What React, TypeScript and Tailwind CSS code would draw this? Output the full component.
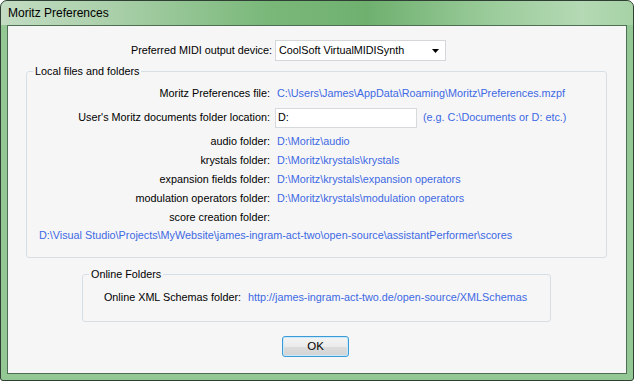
import React from 'react';

const linkCls = 'text-[#3d69e4] whitespace-nowrap';

const rows: { label: string; value?: string; h: string }[] = [
  { label: 'audio folder:', value: 'D:\\Moritz\\audio', h: 'h-[19px]' },
  { label: 'krystals folder:', value: 'D:\\Moritz\\krystals\\krystals', h: 'h-[19px]' },
  { label: 'expansion fields folder:', value: 'D:\\Moritz\\krystals\\expansion operators', h: 'h-[19px]' },
  { label: 'modulation operators folder:', value: 'D:\\Moritz\\krystals\\modulation operators', h: 'h-[19px]' },
  { label: 'score creation folder:', h: 'h-[19px]' },
];

const App: React.FC = () => {
  return (
    <div className="w-[634px] h-[381px] overflow-hidden bg-white">
      <div className="w-[634px] h-[381px] flex flex-col border border-[#2f3f33] rounded-t-[7px] rounded-b-[3px] bg-[#93c793] overflow-hidden">
        {/* title bar */}
        <div className="h-[24px] shrink-0 flex items-center pl-[7px] rounded-t-[6px] bg-[linear-gradient(90deg,#c3dcc3_0%,#a9cfa9_18%,#7ab87a_42%,#6fb06f_58%,#9ccc9c_78%,#b4d9b4_92%,#a6d2a6_100%)]">
          <span className="font-['Liberation_Sans',sans-serif] text-[12px] text-black leading-none">Moritz Preferences</span>
        </div>

        {/* frame + client */}
        <div className="flex-1 px-[6px] pb-[6px]">
          <div className="h-[349px] border border-[#4f6f55] bg-[#f6f6f6] font-['Liberation_Sans',sans-serif] text-[10.8px] leading-[13px] text-black flex flex-col">
            {/* MIDI device row */}
            <div className="flex items-center mt-[14px] h-[21px]">
              <div className="w-[264px] text-right whitespace-nowrap">Preferred MIDI output device:</div>
              <div className="ml-[3px] w-[171px] h-[21px] bg-white border border-[#d4d6da] flex items-center justify-between pl-[3px] pr-[6px]">
                <span className="whitespace-nowrap">CoolSoft VirtualMIDISynth</span>
                <svg width="7" height="4" viewBox="0 0 7 4"><path d="M0 0h7L3.5 4z" fill="#000" /></svg>
              </div>
            </div>

            {/* Local files and folders */}
            <fieldset className="mt-[4px] ml-[18px] w-[581px] border border-[#d5dfe5] rounded-[3px] pt-[6px] pb-[14px]">
              <legend className="ml-[6px] px-[2px] leading-[13px]">Local files and folders</legend>
              <div className="flex items-center h-[19px]">
                <div className="w-[243px] text-right whitespace-nowrap">Moritz Preferences file:</div>
                <div className={`ml-[7px] ${linkCls}`}>C:\Users\James\AppData\Roaming\Moritz\Preferences.mzpf</div>
              </div>
              <div className="flex items-center h-[29px]">
                <div className="w-[243px] text-right whitespace-nowrap">User's Moritz documents folder location:</div>
                <div className="ml-[5px] w-[142px] h-[20px] bg-white border border-[#d7d9dc] flex items-center pl-[2px]">D:</div>
                <div className={`ml-[6px] ${linkCls}`}>(e.g. C:\Documents or D: etc.)</div>
              </div>
              {rows.map((r) => (
                <div key={r.label} className={`flex items-center ${r.h}`}>
                  <div className="w-[243px] text-right whitespace-nowrap">{r.label}</div>
                  {r.value && <div className={`ml-[7px] ${linkCls}`}>{r.value}</div>}
                </div>
              ))}
              <div className={`h-[16px] flex items-center pl-[12px] ${linkCls}`}>
                D:\Visual Studio\Projects\MyWebsite\james-ingram-act-two\open-source\assistantPerformer\scores
              </div>
            </fieldset>

            {/* Online folders */}
            <fieldset className="mt-[10px] ml-[74px] w-[469px] border border-[#d5dfe5] rounded-[3px] pt-[7px] pb-[14px]">
              <legend className="ml-[6px] px-[2px] leading-[13px]">Online Folders</legend>
              <div className="flex items-center h-[19px]">
                <div className="w-[158px] text-right whitespace-nowrap">Online XML Schemas folder:</div>
                <div className={`ml-[7px] ${linkCls}`}>http://james-ingram-act-two.de/open-source/XMLSchemas</div>
              </div>
            </fieldset>

            {/* OK */}
            <div className="mt-[14px] ml-[274px]">
              <button className="w-[67px] h-[21px] rounded-[3px] border border-[#3c9ad8] bg-[linear-gradient(180deg,#f4f4f4_0%,#ebebeb_50%,#dddddd_51%,#d3d3d3_100%)] shadow-[inset_0_0_0_1px_#c8eafb] text-[11.5px] leading-[13px] text-black font-['Liberation_Sans',sans-serif]">
                OK
              </button>
            </div>
          </div>
        </div>
      </div>
    </div>
  );
};

export default App;
